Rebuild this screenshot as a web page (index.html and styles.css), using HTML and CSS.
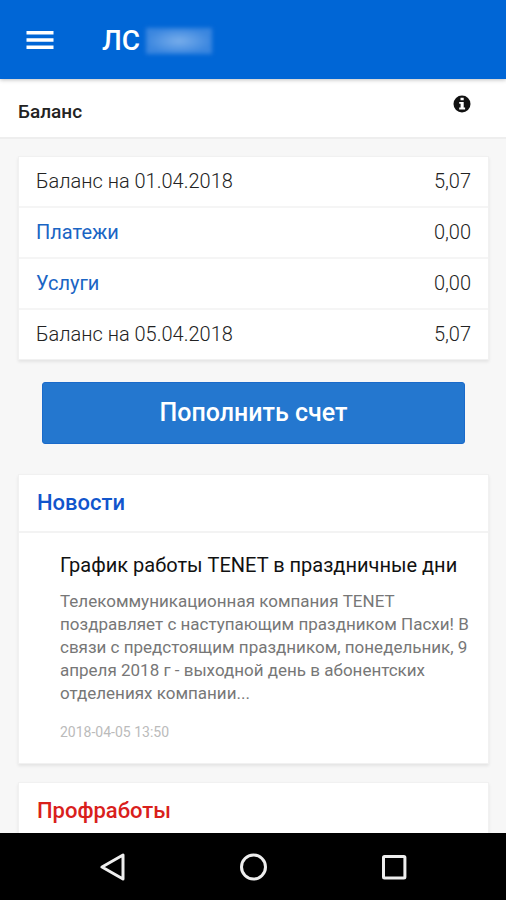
FILE: index.html
```html
<!DOCTYPE html>
<html lang="ru">
<head>
<meta charset="utf-8">
<meta name="viewport" content="width=device-width, initial-scale=1">
<title>Баланс</title>
<link rel="stylesheet" href="styles.css">
</head>
<body>
<div class="app">
  <header class="topbar">
    <button class="icon-button" type="button" aria-label="Меню">
      <svg width="28" height="20" viewBox="0 0 28 20" aria-hidden="true">
        <path d="M.5 1.8h27M.5 9h27M.5 16.2h27" stroke="#fff" stroke-width="3.6" fill="none"/>
      </svg>
    </button>
    <span class="account">ЛС <span class="account-mask"></span></span>
  </header>

  <main class="content">
    <div class="subheader">
      <h1 class="page-title">Баланс</h1>
      <button class="icon-button info" type="button" aria-label="Информация">
        <svg width="18" height="18" viewBox="0 0 18 18" aria-hidden="true">
          <circle cx="9" cy="9" r="8.5" fill="#111"/>
          <path d="M7.5 2.7h3.2v2.6H7.5zM6.2 6.9h4.5v5.5h1.4v2H6.2v-2h1.4V8.8H6.2z" fill="#fff"/>
        </svg>
      </button>
    </div>

    <div class="feed">
      <table class="card balance">
        <tbody>
          <tr><th scope="row">Баланс на 01.04.2018</th><td>5,07</td></tr>
          <tr><th scope="row"><a href="#payments">Платежи</a></th><td>0,00</td></tr>
          <tr><th scope="row"><a href="#services">Услуги</a></th><td>0,00</td></tr>
          <tr><th scope="row">Баланс на 05.04.2018</th><td>5,07</td></tr>
        </tbody>
      </table>

      <button class="pay" type="button">Пополнить счет</button>

      <section class="card">
        <h2 class="card-title">Новости</h2>
        <article class="article">
          <h3 class="article-title">График работы TENET в праздничные дни</h3>
          <p class="article-text">Телекоммуникационная компания TENET поздравляет с наступающим праздником Пасхи! В связи с предстоящим праздником, понедельник, 9 апреля 2018 г - выходной день в абонентских отделениях компании...</p>
          <time class="article-date" datetime="2018-04-05T13:50">2018-04-05 13:50</time>
        </article>
      </section>

      <section class="card">
        <h2 class="card-title alert">Профработы</h2>
      </section>
    </div>
  </main>

  <nav class="navbar" aria-label="Навигация">
    <button class="icon-button" type="button" aria-label="Назад">
      <svg width="28" height="28" viewBox="0 0 28 28" aria-hidden="true">
        <path d="M25 2v24L4 14z" fill="none" stroke="#eee" stroke-width="3" stroke-linejoin="round"/>
      </svg>
    </button>
    <button class="icon-button" type="button" aria-label="Домой">
      <svg width="28" height="28" viewBox="0 0 28 28" aria-hidden="true">
        <circle cx="14.5" cy="14" r="12" fill="none" stroke="#eee" stroke-width="3"/>
      </svg>
    </button>
    <button class="icon-button" type="button" aria-label="Обзор">
      <svg width="28" height="28" viewBox="0 0 28 28" aria-hidden="true">
        <rect x="3.5" y="3.5" width="21.4" height="21.4" rx="1" fill="none" stroke="#eee" stroke-width="3"/>
      </svg>
    </button>
  </nav>
</div>
</body>
</html>
```
FILE: styles.css
```css
* {
  box-sizing: border-box;
}

body {
  margin: 0;
  background: #f7f7f7;
  color: #222;
  font-family: Roboto, "Liberation Sans", sans-serif;
  font-size: 20px;
}

h1, h2, h3, p {
  margin: 0;
}

a {
  color: #1a65c4;
  font-weight: 400;
  text-decoration: none;
}

.app {
  display: flex;
  flex-direction: column;
  height: 100vh;
}

.icon-button {
  display: flex;
  padding: 0;
  border: 0;
  background: none;
}

.topbar {
  position: relative;
  display: flex;
  align-items: center;
  gap: 48px;
  flex: none;
  padding: 25px 26px 23px;
  background: #0066d6;
  box-shadow: 0 1px 4px rgba(0, 0, 0, 0.25);
}

.account {
  display: flex;
  align-items: center;
  gap: 6px;
  color: #fff;
  font-size: 28px;
  font-weight: 500;
  line-height: 31px;
}

.account-mask {
  width: 66px;
  height: 26px;
  background: radial-gradient(closest-side, #79aeeb, #3a86df);
  filter: blur(2px);
}

.content {
  flex: 1;
  min-height: 0;
  overflow: hidden;
}

.subheader {
  display: flex;
  justify-content: space-between;
  align-items: flex-start;
  padding: 16px 35px 13px 18px;
  border-bottom: 2px solid #eee;
  background: #fff;
}

.page-title {
  padding-top: 5px;
  color: #222;
  font-size: 19px;
  font-weight: 500;
  line-height: 24px;
}

.feed {
  display: flex;
  flex-direction: column;
  padding: 17px 17px 17px 18px;
  gap: 18px;
}

.card {
  border: 1px solid #f1f1f1;
  background: #fff;
  box-shadow: 0 2px 3px rgba(0, 0, 0, 0.08);
}

.balance {
  width: 100%;
  border-collapse: separate;
  border-spacing: 0;
}

.balance th,
.balance td {
  padding: 12px 17px 13px;
  font-weight: 300;
  line-height: 24px;
  text-align: left;
}

.balance td {
  text-align: right;
}

.balance tr + tr > * {
  border-top: 2px solid #f5f5f5;
}

.pay {
  margin: 4px 24px 12px;
  padding: 14px;
  border: 1px solid #1a6aca;
  border-radius: 3px;
  background: #2477cf;
  color: #fff;
  font-family: inherit;
  font-size: 25px;
  font-weight: 500;
  line-height: 32px;
}

.card-title {
  padding: 13px 18px;
  border-bottom: 2px solid #f3f3f3;
  color: #1155cc;
  font-size: 22px;
  font-weight: 500;
  line-height: 30px;
}

.card-title.alert {
  color: #d9201c;
}

.article {
  padding: 20px 16px 21px 41px;
}

.article-title {
  color: #111;
  font-size: 20px;
  font-weight: 400;
  line-height: 24px;
}

.article-text {
  margin: 13px 0 17px;
  color: #777;
  font-size: 17px;
  line-height: 23px;
}

.article-date {
  display: block;
  color: #bbb;
  font-size: 14px;
  line-height: 20px;
}

.navbar {
  position: relative;
  display: flex;
  justify-content: center;
  gap: 113px;
  flex: none;
  padding: 20px 0 19px;
  background: #000;
}
```
